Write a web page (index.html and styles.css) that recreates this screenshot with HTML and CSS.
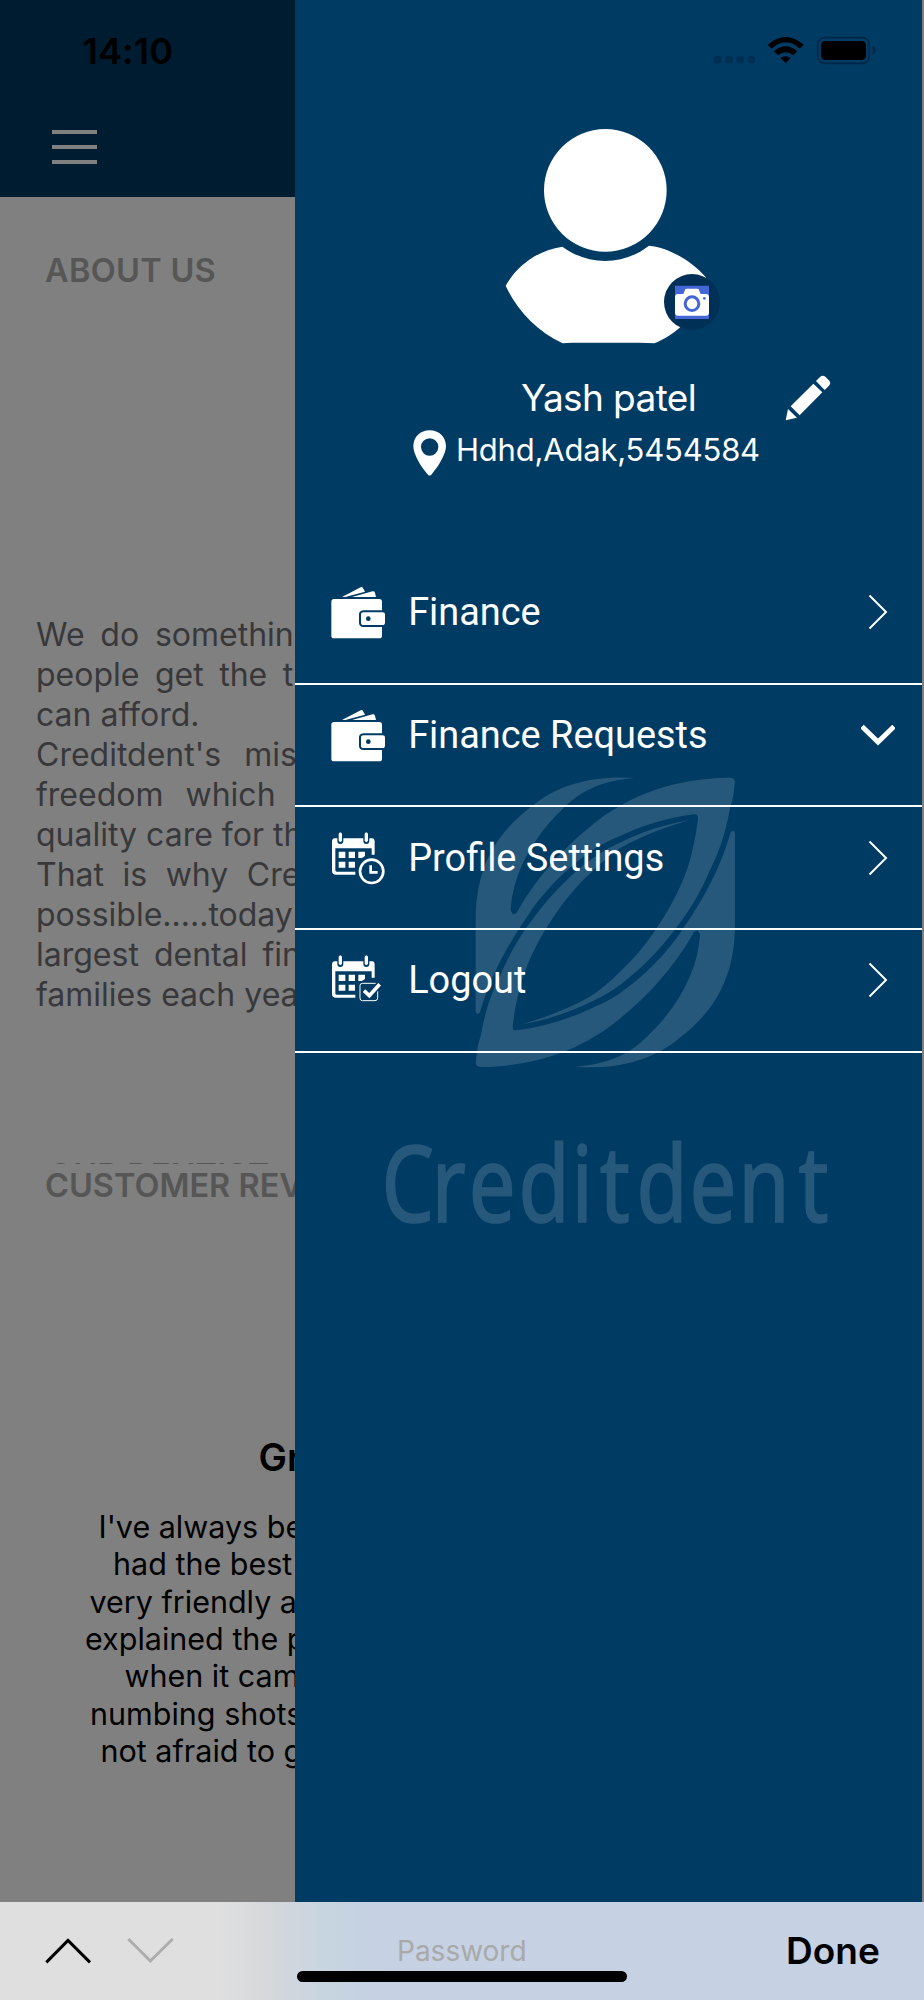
FILE: index.html
```html
<!DOCTYPE html>
<html lang="en">
<head>
<meta charset="utf-8">
<title>Creditdent</title>
<link rel="stylesheet" href="styles.css">
</head>
<body>
<div class="screen">
  <main class="page">
    <header class="header">
      <div class="clock">14:10</div>
      <div class="burger"><i></i><i></i><i></i></div>
    </header>
    <h2 class="heading about">ABOUT US</h2>
    <div class="intro">
      <div class="w1">We do somethin</div>
      <div class="w2">people get the t</div>
      <div>can afford.</div>
      <div class="w4">Creditdent's mis</div>
      <div class="w5">freedom which</div>
      <div>quality care for th</div>
      <div class="w7">That is why Cre</div>
      <div>possible.....today</div>
      <div class="w9">largest dental fin</div>
      <div>families each yea</div>
    </div>
    <h2 class="heading dentist">OUR DENTIST</h2>
    <h2 class="heading customer">CUSTOMER REV</h2>
    <h3 class="review-title">Gr</h3>
    <div class="review">
      <div class="r1">I've always be</div>
      <div class="r2">had the best</div>
      <div class="r3">very friendly a</div>
      <div class="r4">explained the p</div>
      <div class="r5">when it cam</div>
      <div class="r6">numbing shots</div>
      <div class="r7">not afraid to g</div>
    </div>
  </main>

  <aside class="drawer">
    <svg class="watermark" viewBox="0 0 1440 1440">
      <defs>
        <path id="leaf" d="M1078 53Q1098 53 1094 72C1090 110 1088 120 1080 145C1065 230 1045 280 1020 330C990 400 960 450 915 508C870 570 810 630 750 675C720 696 695 712 662 726C600 757 520 783 455 793C520 775 600 745 662 709C690 690 720 665 750 635C790 600 830 550 860 505C905 440 950 350 965 280C975 240 980 210 984 175Q985 162 972 163C900 172 820 195 750 228C715 243 690 255 662 274C590 325 520 395 472 469C410 560 360 650 330 757Q322 767 317 755L317 480C318 330 370 225 490 135C570 70 680 45 795 54C690 62 630 95 580 145C480 240 428 350 422 450Q428 470 440 458C500 350 580 265 660 200C780 100 920 55 1078 53Z"/>
      </defs>
      <g class="mark">
        <use href="#leaf"/>
        <use href="#leaf" transform="rotate(180 706 487)"/>
        <text class="brand" transform="scale(.78 1)" y="1385" x="44 237 380 571 775 884 1025 1229 1416 1648">Creditdent</text>
      </g>
    </svg>

    <div class="status">
      <svg width="180" height="40" viewBox="0 0 540 120">
        <g fill="#002f54"><rect x="11" y="78" width="24" height="22" rx="8"/><rect x="45" y="78" width="24" height="22" rx="8"/><rect x="79" y="78" width="24" height="22" rx="8"/><rect x="113" y="78" width="22" height="22" rx="8"/></g>
        <path d="M173 44Q227 -2 281 44L269 56Q227 18 185 56ZM192 64Q227 34 262 64L250 76Q227 57 204 76ZM212 84Q227 73 242 84L227 100Z"/>
        <rect x="323" y="23" width="155" height="77" rx="21" fill="none" stroke="#002745" stroke-width="5"/>
        <rect x="333" y="33" width="135" height="57" rx="13"/>
        <path d="M488 48Q497 52 497 61Q497 70 488 75Z" fill="#002745"/>
      </svg>
    </div>

    <div class="profile">
      <svg class="avatar" width="220" height="220" viewBox="75 85 660 660">
        <circle cx="376" cy="272" r="184" fill="#fff"/>
        <path fill="#fff" d="M77 558C110 500 170 452 247 441C325 498 427 500 507 438C575 445 640 490 677 532L680 607L598 685C580 700 555 718 523 731L480 729H275L248 731C170 695 110 630 77 558Z"/>
        <circle cx="636" cy="607" r="84" fill="#003055"/>
        <path fill="#4466d6" d="M585 558h102v100H585z"/>
        <path fill="#fff" d="M585 592Q585 583 594 583H610L616 569Q617 567 620 567H652Q655 567 656 569L662 583H678Q687 583 687 592V639Q687 648 678 648H594Q585 648 585 639Z"/>
        <circle cx="636" cy="612" r="20.500" fill="none" stroke="#4466d6" stroke-width="9"/>
        <circle cx="673" cy="596" r="4" fill="#4466d6"/>
      </svg>
      <div class="name-row">
        <span class="name">Yash patel</span>
        <svg class="pencil" width="46" height="46" viewBox="915 825 138 138" fill="#fff"><path d="M917 961L924 927L951 953ZM932 919L1000 851L1027 877L959 946ZM1008 843L1020 831Q1028 824 1037 831L1048 842Q1054 850 1047 857L1034 870Z"/></svg>
      </div>
      <div class="address-row">
        <svg width="34" height="47" viewBox="40 32 102 141"><path fill="#fff" fill-rule="evenodd" d="M90 33C118 33 139 53 139 81C139 105 113 147 95 166Q90 171 85 166C66 147 41 105 41 81C41 53 62 33 90 33ZM90 57A26 26 0 1 0 90 109A26 26 0 1 0 90 57Z"/></svg>
        <span class="address">Hdhd,Adak,5454584</span>
      </div>
    </div>

    <svg class="symbols" width="0" height="0">
      <symbol id="wallet" viewBox="120 75 170 165">
        <path fill="#fff" d="M156 111L212 82Q217 80 219 84L225 95L166 111ZM186 111L248 94Q253 93 255 98L258 111ZM132 117H268Q276 117 276 125V151H220Q206 153 207 165V188Q207 200 220 201H276V227Q276 235 268 235H132Q124 235 124 227V125Q124 117 132 117ZM221 157H277Q285 157 285 164V188Q285 195 277 195H221Q213 195 213 188V164Q213 157 221 157Z"/><circle cx="235" cy="176" r="7" fill="#003b64"/>
      </symbol>
      <symbol id="calendar" viewBox="120 810 170 165">
        <path fill="#fff" d="M134 835H142V843A9 9 0 0 0 160 843V835H220V843A9 9 0 0 0 238 843V835H247Q254 836 254 845V884H245V865H136V931Q136 935 140 935H196V944H138Q126 944 126 932V845Q126 836 134 835ZM146 821Q151 812 156 821V842Q151 850 146 842ZM224 821Q229 812 234 821V842Q229 850 224 842ZM146 875H166V894H146ZM176 875H195V894H176ZM205 875H225V888L216 894H205ZM146 905H166V923H146ZM176 905H195V923H176Z"/>
      </symbol>
    </svg>

    <nav class="menu">
      <a class="item">
        <svg class="icon"><use href="#wallet"/></svg>
        <span class="label">Finance</span>
        <svg class="arrow" viewBox="0 0 34 38"><path d="M8.500 2.500L25 19L8.500 35.500" stroke-width="2"/></svg>
      </a>
      <a class="item">
        <svg class="icon"><use href="#wallet"/></svg>
        <span class="label">Finance Requests</span>
        <svg class="arrow" viewBox="0 0 34 38"><path d="M1 10.500L17 26L33 10.500" stroke-width="5"/></svg>
      </a>
      <a class="item">
        <svg class="icon" viewBox="120 810 170 165"><use href="#calendar" x="120" y="810" width="170" height="165"/><circle cx="245" cy="934" r="35" fill="none" stroke="#fff" stroke-width="8"/><path d="M242 916V937H263" fill="none" stroke="#fff" stroke-width="8"/></svg>
        <span class="label">Profile Settings</span>
        <svg class="arrow" viewBox="0 0 34 38"><path d="M8.500 2.500L25 19L8.500 35.500" stroke-width="2"/></svg>
      </a>
      <a class="item">
        <svg class="icon" viewBox="120 810 170 165"><use href="#calendar" x="120" y="810" width="170" height="165"/><path d="M257 901H217Q210 901 210 908V945Q210 953 217 953H255Q263 953 263 945V925" fill="none" stroke="#fff" stroke-width="3"/><path d="M222 923L238 938L269 904" fill="none" stroke="#fff" stroke-width="11"/></svg>
        <span class="label">Logout</span>
        <svg class="arrow" viewBox="0 0 34 38"><path d="M8.500 2.500L25 19L8.500 35.500" stroke-width="2"/></svg>
      </a>
    </nav>
  </aside>

  <footer class="toolbar">
    <svg class="steppers" width="132" height="28" viewBox="0 0 396 84" fill="none" stroke-width="9"><path d="M4 79L69 13L135 79" stroke="#000"/><path d="M250 9L316 75L383 9" stroke="#adadad"/></svg>
    <span class="field">Password</span>
    <span class="done">Done</span>
    <div class="home"></div>
  </footer>
</div>
</body>
</html>
```

FILE: styles.css
```css
* { box-sizing: border-box; }
body { margin: 0; }
.screen {
  position: relative;
  width: 924px;
  height: 2000px;
  overflow: hidden;
  background: #808080;
  font-family: Inter, "Liberation Sans", sans-serif;
  display: flex;
  flex-direction: column;
}
.page { width: 295px; height: 1902px; overflow: hidden; white-space: nowrap; }
.header { width: 924px; height: 196.500px; background: #001c31; padding: 29.500px 0 0 82.500px; }
.clock { font-size: 36px; font-weight: 600; line-height: 42px; letter-spacing: 0.200px; color: #000; }
.burger { margin: 58px 0 0 -30.500px; width: 45px; display: flex; flex-direction: column; gap: 11px; }
.burger i { height: 4px; background: #808080; }
.heading { margin: 0; padding-left: 45px; height: 40px; font-size: 32.500px; font-weight: 600; line-height: 40px; color: #565656; }
.about { margin-top: 54px; letter-spacing: 0.300px; }
.intro { margin-top: 324.500px; padding-left: 36px; font-size: 32px; line-height: 40px; color: #38383b; }
.intro .w1 { word-spacing: 6.800px; }
.intro .w2 { word-spacing: 6.500px; }
.intro .w4 { word-spacing: 14px; }
.intro .w5 { word-spacing: 13px; }
.intro .w7 { word-spacing: 9.500px; }
.intro .w9 { word-spacing: 6px; }
.dentist { margin-top: 141px; padding-left: 48px; height: 8px; overflow: hidden; letter-spacing: 0.200px; }
.customer { margin-top: 2px; }
.review-title { margin: 228px 0 0; padding-left: 258.500px; font-size: 38px; line-height: 46px; font-weight: 600; }
.review { margin-top: 28px; font-size: 30.500px; line-height: 37.350px; color: #000; }
.r1 { padding-left: 98.500px; }
.r2 { padding-left: 113px; }
.r3 { padding-left: 89.500px; }
.r4 { padding-left: 85px; }
.r5 { padding-left: 124.500px; }
.r6 { padding-left: 90px; }
.r7 { padding-left: 100.500px; }

.drawer { position: absolute; left: 295px; top: 0; width: 627px; height: 1902px; background: #003b64; color: #fff; }
.watermark { position: absolute; left: 75px; top: 760px; width: 480px; height: 480px; }
.mark { fill: #fff; opacity: .15; }
.brand { font-family: "Noto Sans", sans-serif; font-size: 320px; stroke: #fff; stroke-width: 5px; }
.status { height: 128.300px; padding: 29.500px 0 0 415px; }
.status svg { display: block; }
.profile { height: 433.700px; }
.avatar { display: block; margin-left: 210px; }
.name-row { display: flex; align-items: flex-start; padding: 26px 0 0 226px; height: 78px; }
.name { width: 264px; font-size: 37px; line-height: 48px; letter-spacing: -0.600px; }
.pencil { margin-top: 1px; }
.address-row { display: flex; align-items: flex-start; padding: 4px 0 0 118px; }
.address { margin-left: 9px; font-size: 31px; line-height: 40px; letter-spacing: -0.200px; }
.symbols { position: absolute; }
.menu { position: relative; }
.item { display: flex; align-items: center; height: 122.700px; padding: 0 27px 20px 35px; border-bottom: 2px solid #fff; }
.icon { width: 56.670px; height: 55px; }
.label { flex: 1; margin-left: 21.500px; font-family: Roboto, sans-serif; font-size: 37.900px; line-height: 48px; }
.arrow { width: 34px; height: 38px; fill: none; stroke: #fff; }

.toolbar {
  position: relative;
  height: 98px;
  display: flex;
  align-items: flex-start;
  background: linear-gradient(90deg, #dfdfdf 0, #dfdfdf 220px, #d6d8db 265px, #cfd6df 295px, #c6d5df 330px, #c6d1e3 375px, #c6d1e3 100%);
}
.steppers { margin: 34px 0 0 45px; }
.field { width: 389px; margin: 29px 0 0 220px; font-size: 28px; line-height: 40px; color: #a9a9a9; }
.done { font-size: 37px; line-height: 48px; font-weight: 600; margin-top: 25px; }
.home { position: absolute; left: 297px; top: 69px; width: 330px; height: 11px; border-radius: 6px; background: #000; }
```
